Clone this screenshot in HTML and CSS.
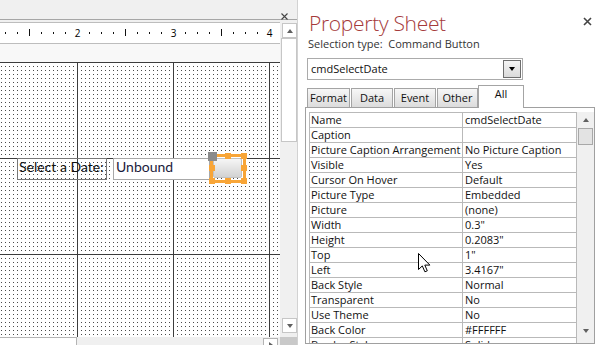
FILE: index.html
```html
<!DOCTYPE html>
<html>
<head>
<meta charset="utf-8">
<link rel="stylesheet" href="styles.css">
</head>
<body>
<div class="app">
  <section class="designer">
    <div class="dtop">
      <svg class="dclose" width="7" height="7" viewBox="0 0 7 7"><path d="M0.5 0.5 L6.5 6.5 M6.5 0.5 L0.5 6.5" stroke="#444" stroke-width="1.1" fill="none"/></svg>
    </div>
    <div class="dbody">
      <div class="dmain">
        <div class="ruler">
          <svg width="280" height="20" viewBox="0 0 280 20">
            <g fill="#111">
              <rect x="5" y="9" width="1" height="2"/><rect x="17" y="9" width="1" height="2"/>
              <rect x="29" y="6" width="1" height="7"/>
              <rect x="41" y="9" width="1" height="2"/><rect x="53" y="9" width="1" height="2"/><rect x="65" y="9" width="1" height="2"/>
              <rect x="89" y="9" width="1" height="2"/><rect x="101" y="9" width="1" height="2"/><rect x="113" y="9" width="1" height="2"/>
              <rect x="125" y="6" width="1" height="7"/>
              <rect x="137" y="9" width="1" height="2"/><rect x="149" y="9" width="1" height="2"/><rect x="161" y="9" width="1" height="2"/>
              <rect x="185" y="9" width="1" height="2"/><rect x="197" y="9" width="1" height="2"/><rect x="209" y="9" width="1" height="2"/>
              <rect x="221" y="6" width="1" height="7"/>
              <rect x="233" y="9" width="1" height="2"/><rect x="245" y="9" width="1" height="2"/><rect x="257" y="9" width="1" height="2"/>
            </g>
            <g class="rnum" text-anchor="middle">
              <text x="77.5" y="13.5">2</text>
              <text x="173.5" y="13.5">3</text>
              <text x="269.5" y="13.5">4</text>
            </g>
          </svg>
        </div>
        <div class="sechead"></div>
        <div class="canvas">
          <div class="ctl lbl">Select a Date:</div>
          <div class="ctl txt">Unbound</div>
          <div class="ctl btn"></div>
          <div class="selframe">
            <span class="hd h1"></span><span class="hd h2"></span><span class="hd h3"></span>
            <span class="hd h4"></span><span class="hd h5"></span>
            <span class="hd h6"></span><span class="hd h7"></span><span class="hd h8"></span>
          </div>
          <div class="movehandle"></div>
        </div>
      </div>
      <div class="vscroll">
        <div class="sbox"><span class="tri up"></span></div>
        <div class="vthumb"></div>
        <div class="vspace"></div>
        <div class="sbox down-box"><span class="tri down"></span></div>
      </div>
    </div>
    <div class="hscroll">
      <div class="hthumb"></div>
      <div class="htrack"></div>
      <div class="harrow"><span class="tri right"></span></div>
      <div class="hcorner"></div>
    </div>
  </section>

  <section class="props">
    <div class="phead">
      <div class="ptitle">Property Sheet</div>
      <svg class="pclose" width="9" height="9" viewBox="0 0 9 9"><path d="M1 1 L8 8 M8 1 L1 8" stroke="#444" stroke-width="1.6" fill="none"/></svg>
    </div>
    <div class="psel">Selection type:&nbsp; Command Button</div>
    <div class="pcombo">
      <span>cmdSelectDate</span>
      <span class="ddbtn"><span class="tri down dark"></span></span>
    </div>
    <div class="ptabs">
      <div class="tab w43">Format</div>
      <div class="tab w42">Data</div>
      <div class="tab w42">Event</div>
      <div class="tab w41 last">Other</div>
      <div class="tab active">All</div>
    </div>
    <div class="pbox">
      <div class="pgrid">
        <div class="c">Name</div><div class="c v">cmdSelectDate</div>
        <div class="c">Caption</div><div class="c v"></div>
        <div class="c">Picture Caption Arrangement</div><div class="c v">No Picture Caption</div>
        <div class="c">Visible</div><div class="c v">Yes</div>
        <div class="c">Cursor On Hover</div><div class="c v">Default</div>
        <div class="c">Picture Type</div><div class="c v">Embedded</div>
        <div class="c">Picture</div><div class="c v">(none)</div>
        <div class="c">Width</div><div class="c v">0.3"</div>
        <div class="c">Height</div><div class="c v">0.2083"</div>
        <div class="c">Top</div><div class="c v">1"</div>
        <div class="c">Left</div><div class="c v">3.4167"</div>
        <div class="c">Back Style</div><div class="c v">Normal</div>
        <div class="c">Transparent</div><div class="c v">No</div>
        <div class="c">Use Theme</div><div class="c v">No</div>
        <div class="c">Back Color</div><div class="c v">#FFFFFF</div>
        <div class="c">Border Style</div><div class="c v">Solid</div>
      </div>
      <div class="pscroll">
        <div class="parr"><span class="tri up"></span></div>
        <div class="pthumb"></div>
        <div class="vspace"></div>
        <div class="parr"><span class="tri down"></span></div>
      </div>
    </div>
  </section>

  <svg class="cursor" width="13" height="20" viewBox="0 0 13 20"><path d="M0.5 0.5 V16.5 L4.3 12.9 L6.9 18.8 L9.3 17.8 L6.8 12.1 H11.9 Z" fill="#fff" stroke="#000" stroke-width="1" stroke-linejoin="miter"/></svg>
</div>
</body>
</html>
```

FILE: styles.css
```css
* { box-sizing: border-box; }
html, body { margin: 0; padding: 0; }
body {
  width: 599px;
  height: 345px;
  overflow: hidden;
  background: #fff;
  font-family: "Open Sans", "Noto Sans", sans-serif;
}
.app {
  position: relative;
  display: flex;
  width: 599px;
  height: 345px;
}

/* ---------- left: form designer ---------- */
.designer {
  flex: none;
  width: 298px;
  border-right: 1px solid #d2d2d2;
  background: #f0f0f0;
  display: flex;
  flex-direction: column;
  overflow: hidden;
}
.dtop {
  height: 20px;
  border-bottom: 1px solid #a6a6a6;
  display: flex;
  justify-content: flex-end;
  align-items: flex-start;
  padding: 13px 9px 0 0;
}
.dclose { display: block; }
.dbody {
  display: flex;
  height: 317px;
}
.dmain {
  width: 280px;
  padding-top: 2px;
  display: flex;
  flex-direction: column;
}
.ruler {
  height: 22px;
  border-top: 1px solid #bdbdbd;
  border-bottom: 1px solid #bdbdbd;
  background: #fff;
}
.ruler svg { display: block; }
.rnum { font-family: "Open Sans", sans-serif; font-size: 10px; fill: #000; }
.sechead {
  height: 18px;
  background: #f8f8f8;
}
.canvas {
  position: relative;
  height: 275px;
  background-color: #fff;
  background-image:
    linear-gradient(90deg, #3c3c3c 1px, transparent 1px),
    linear-gradient(#3c3c3c 1px, transparent 1px),
    linear-gradient(90deg, transparent 1px, #fff 1px),
    linear-gradient(#4a4a4a 1px, transparent 1px);
  background-size: 96px 96px, 96px 96px, 4px 4px, 4px 4px;
  background-position: 77px 0, 0 0, 1px 0, 0 0;
}
.ctl {
  position: absolute;
  top: 96px;
  height: 22px;
  font-family: Lato, "Open Sans", sans-serif;
  font-size: 14px;
  line-height: 16px;
  white-space: nowrap;
}
.lbl {
  left: 17px;
  width: 90px;
  border: 1px solid #777;
  padding-left: 1px;
  color: #111;
}
.txt {
  left: 113px;
  width: 97px;
  border: 1px solid #a8a8a8;
  background: #fff;
  padding-left: 2px;
  color: #1b1b3c;
}
.btn {
  left: 213px;
  width: 29px;
  height: 20px;
  border: 1px solid #c2c2c2;
  border-radius: 2px;
  background: linear-gradient(#f6f6f6, #d2d2d2);
}
.selframe {
  position: absolute;
  left: 210px;
  top: 92px;
  width: 36px;
  height: 29px;
  border: 3px solid #f8a537;
}
.hd {
  position: absolute;
  width: 6px;
  height: 6px;
  background: #f8a537;
}
.h1 { left: -4px; top: -4px; }
.h2 { left: 12px; top: -4px; }
.h3 { left: 28px; top: -4px; }
.h4 { left: -4px; top: 8px; }
.h5 { left: 28px; top: 8px; }
.h6 { left: -4px; top: 21px; }
.h7 { left: 12px; top: 21px; }
.h8 { left: 28px; top: 21px; }
.movehandle {
  position: absolute;
  left: 208px;
  top: 90px;
  width: 9px;
  height: 9px;
  background: #8b8b8b;
}

.vscroll {
  width: 17px;
  background: #f0f0f0;
  display: flex;
  flex-direction: column;
  align-items: flex-end;
  padding: 3px 0 4px;
}
.sbox {
  width: 15px;
  height: 15px;
  border: 1px solid #c6c6c6;
  background: #fff;
  display: flex;
  align-items: center;
  justify-content: center;
}
.vthumb {
  width: 16px;
  height: 104px;
  border: 1px solid #c6c6c6;
  background: #fff;
}
.vspace { flex: 1; }

.tri { display: block; width: 0; height: 0; }
.tri.up { border-left: 3.5px solid transparent; border-right: 3.5px solid transparent; border-bottom: 4px solid #606060; }
.tri.down { border-left: 3.5px solid transparent; border-right: 3.5px solid transparent; border-top: 4px solid #606060; }
.tri.right { border-top: 3.5px solid transparent; border-bottom: 3.5px solid transparent; border-left: 4px solid #606060; }
.tri.dark { border-top-color: #000; }

.hscroll {
  height: 8px;
  display: flex;
  background: #f0f0f0;
}
.hthumb {
  width: 77px;
  border-top: 1px solid #b4b4b4;
  border-right: 1px solid #b4b4b4;
  background: #fff;
}
.htrack { width: 186px; }
.harrow {
  width: 15px;
  height: 15px;
  margin-top: 1px;
  border: 1px solid #b4b4b4;
  background: #fff;
  display: flex;
  justify-content: center;
  padding-top: 3px;
}
.hcorner {
  width: 17px;
  margin-left: 2px;
  background: #c9c9c9;
}

/* ---------- right: property sheet ---------- */
.props {
  flex: 1;
  display: flex;
  flex-direction: column;
  background: #fff;
  font-size: 11px;
  color: #111;
}
.phead {
  margin-top: 10px;
  height: 26px;
  display: flex;
  justify-content: space-between;
  align-items: flex-start;
  padding: 0 7px 0 11px;
}
.ptitle {
  font-size: 21px;
  font-weight: 300;
  line-height: 26px;
  letter-spacing: -0.3px;
  color: #a53a3b;
}
.pclose { margin-top: 7px; display: block; }
.psel {
  height: 16px;
  line-height: 16px;
  padding-left: 10px;
  color: #333;
}
.pcombo {
  margin: 6px 0 0 9px;
  width: 216px;
  height: 22px;
  border: 1px solid #ababab;
  display: flex;
  align-items: center;
  justify-content: space-between;
  padding: 0 1px 0 3px;
  line-height: 14px;
}
.ddbtn {
  width: 18px;
  height: 18px;
  border: 1px solid #6e6e6e;
  background: linear-gradient(#f5f5f5, #dadada);
  display: flex;
  align-items: center;
  justify-content: center;
}
.ptabs {
  margin-top: 5px;
  height: 22px;
  display: flex;
  align-items: flex-end;
  padding-left: 9px;
}
.tab {
  height: 19px;
  border: 1px solid #a4a4a4;
  border-bottom: none;
  background: linear-gradient(#f7f7f7, #dcdcdc);
  text-align: center;
  line-height: 18px;
  margin-right: 1px;
  color: #111;
}
.w43 { width: 43px; }
.w42 { width: 42px; }
.w41 { width: 41px; }
.tab.last { margin-right: 0; }
.tab.active {
  width: 46px;
  height: 23px;
  margin-bottom: -1px;
  background: #fff;
  line-height: 16px;
  position: relative;
  z-index: 1;
}
.pbox {
  margin-left: 7px;
  width: 290px;
  height: 237px;
  border: 1px solid #a0a0a0;
  padding: 4px 0 0 3px;
  display: flex;
}
.pgrid {
  width: 268px;
  height: 231px;
  overflow: hidden;
  display: grid;
  grid-template-columns: 153px 114px;
  grid-auto-rows: 15px;
  border-top: 1px solid #b9b9b9;
  border-left: 1px solid #b9b9b9;
  align-content: start;
}
.c {
  border-right: 1px solid #b9b9b9;
  border-bottom: 1px solid #b9b9b9;
  line-height: 14px;
  padding-left: 1px;
  white-space: nowrap;
  overflow: hidden;
}
.c.v { padding-left: 2px; }
.pscroll {
  width: 17px;
  height: 231px;
  background: #f0f0f0;
  display: flex;
  flex-direction: column;
  align-items: center;
  padding-bottom: 5px;
}
.parr {
  height: 15px;
  display: flex;
  align-items: center;
  justify-content: center;
  width: 15px;
}
.pthumb {
  width: 15px;
  height: 17px;
  margin-top: 1px;
  border: 1px solid #a8a8a8;
  background: #e3e3e3;
}

.cursor {
  position: absolute;
  left: 418px;
  top: 253px;
  display: block;
}
```
